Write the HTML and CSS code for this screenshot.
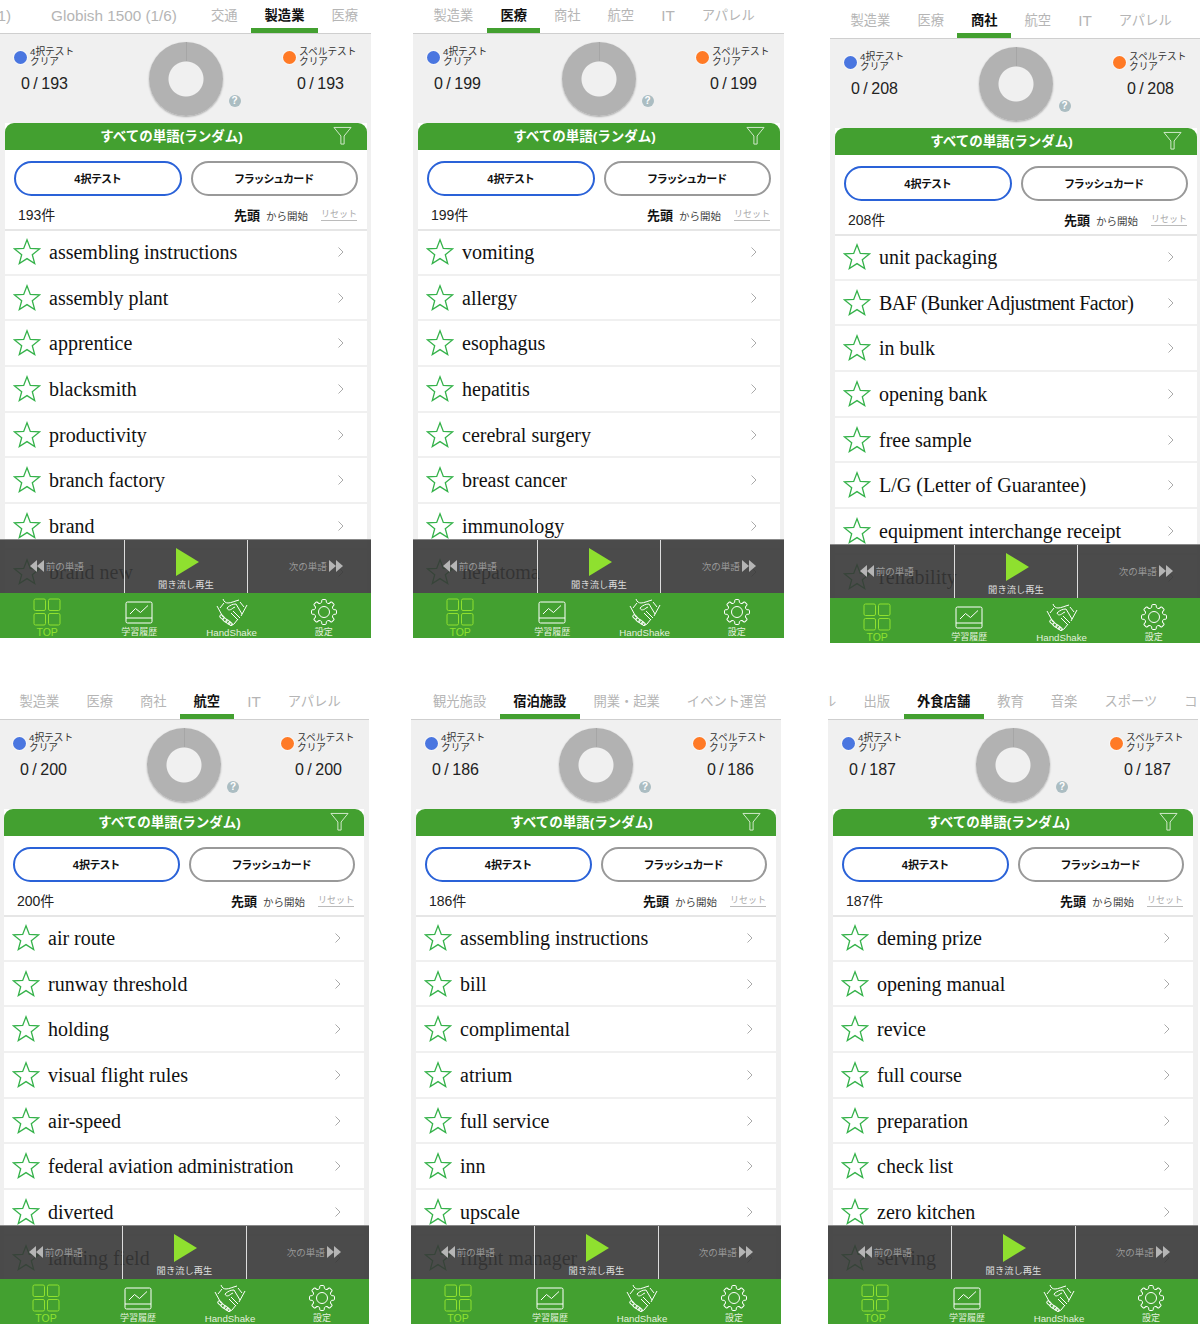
FILE: index.html
```html
<!DOCTYPE html>
<html lang="ja">
<head>
    <meta charset="UTF-8">
    <title>単語リスト</title>
    <link rel="stylesheet" href="styles.css">
</head>
<body>
    <svg class="defs" width="0" height="0">
        <symbol id="i-star" viewBox="0 0 28 28"><path d="M14 1.8l3.3 8.6 9.2.5-7.2 5.8 2.4 8.9-7.7-5-7.7 5 2.4-8.9-7.2-5.8 9.2-.5z"/></symbol>
        <symbol id="i-chev" viewBox="0 0 8 12"><path d="M1.5 1.5L6 6l-4.5 4.5"/></symbol>
        <symbol id="i-filter" viewBox="0 0 20 20"><path d="M1 1h18l-7.3 9v8.5h-3.4V10z"/></symbol>
        <symbol id="i-grid" viewBox="0 0 28 28"><rect x="1" y="1" width="11.5" height="11.5" rx="1.5"/><rect x="15.5" y="1" width="11.5" height="11.5" rx="1.5"/><rect x="1" y="15.5" width="11.5" height="11.5" rx="1.5"/><rect x="15.5" y="15.5" width="11.5" height="11.5" rx="1.5"/></symbol>
        <symbol id="i-chart" viewBox="0 0 28 24"><rect x="1" y="1" width="26" height="21" rx="1.5"/><path d="M1 17h26M5 13l5.5-5.5 5 4L23 4.5"/></symbol>
        <symbol id="i-hands" viewBox="0 0 32 28">
            <path d="M7 1C8 4 10 5 12 5C15 5 19 3 23 2M1 8L7 19M31 7L25 18M8 5L4 10M24 4L28 9"/>
            <path d="M11 10C14 7 17 6 20 6L26 16M11 10C12 13 15 12 17 10L19 9M17 13L24 20M15 15L22 22M22 21L18 26C17 27 16 27 15 26"/>
            <rect x="3.5" y="17.5" width="5" height="3" rx="1.5" transform="rotate(45 6 19)"/>
            <rect x="6.5" y="20.5" width="5" height="3" rx="1.5" transform="rotate(45 9 22)"/>
            <rect x="9.5" y="22.5" width="5" height="3" rx="1.5" transform="rotate(45 12 24)"/>
            <rect x="12.5" y="24.5" width="4" height="2.5" rx="1.2" transform="rotate(45 14.5 25.7)"/>
        </symbol>
        <symbol id="i-gear" viewBox="0 0 28 28">
            <circle cx="14" cy="14" r="5.5"/>
            <path d="M10.36 5.22Q11.3 5 11.6 4.4L11.9 2Q12 1.5 12.6 1.5H15.4Q16 1.5 16.1 2L16.4 4.4Q16.7 5 17.64 5.22"/>
            <path transform="rotate(45 14 14)" d="M10.36 5.22Q11.3 5 11.6 4.4L11.9 2Q12 1.5 12.6 1.5H15.4Q16 1.5 16.1 2L16.4 4.4Q16.7 5 17.64 5.22"/>
            <path transform="rotate(90 14 14)" d="M10.36 5.22Q11.3 5 11.6 4.4L11.9 2Q12 1.5 12.6 1.5H15.4Q16 1.5 16.1 2L16.4 4.4Q16.7 5 17.64 5.22"/>
            <path transform="rotate(135 14 14)" d="M10.36 5.22Q11.3 5 11.6 4.4L11.9 2Q12 1.5 12.6 1.5H15.4Q16 1.5 16.1 2L16.4 4.4Q16.7 5 17.64 5.22"/>
            <path transform="rotate(180 14 14)" d="M10.36 5.22Q11.3 5 11.6 4.4L11.9 2Q12 1.5 12.6 1.5H15.4Q16 1.5 16.1 2L16.4 4.4Q16.7 5 17.64 5.22"/>
            <path transform="rotate(225 14 14)" d="M10.36 5.22Q11.3 5 11.6 4.4L11.9 2Q12 1.5 12.6 1.5H15.4Q16 1.5 16.1 2L16.4 4.4Q16.7 5 17.64 5.22"/>
            <path transform="rotate(270 14 14)" d="M10.36 5.22Q11.3 5 11.6 4.4L11.9 2Q12 1.5 12.6 1.5H15.4Q16 1.5 16.1 2L16.4 4.4Q16.7 5 17.64 5.22"/>
            <path transform="rotate(315 14 14)" d="M10.36 5.22Q11.3 5 11.6 4.4L11.9 2Q12 1.5 12.6 1.5H15.4Q16 1.5 16.1 2L16.4 4.4Q16.7 5 17.64 5.22"/>
        </symbol>
    </svg>

    <div class="row row-top">

        <!-- 製造業 -->
        <div class="phone">
            <div class="tabs tabs-a">
                <span class="tab tab-latin tab-first">1)</span><span class="tab tab-latin tab-globish">Globish 1500 (1/6)</span><span class="tab">交通</span><span class="tab active">製造業</span><span class="tab">医療</span>
            </div>
            <div class="stats">
                <div class="stat"><div class="stat-label"><i class="dot dot-blue"></i><span>4択テスト<br>クリア</span></div><div class="stat-num">0 / 193</div></div>
                <div class="donut"><i class="help">?</i></div>
                <div class="stat stat-right"><div class="stat-label"><i class="dot dot-orange"></i><span>スペルテスト<br>クリア</span></div><div class="stat-num">0 / 193</div></div>
            </div>
            <div class="card">
                <div class="card-head">すべての単語(ランダム)<svg class="filter"><use href="#i-filter"/></svg></div>
                <div class="modes"><button class="mode mode-on">4択テスト</button><button class="mode">フラッシュカード</button></div>
                <div class="meta"><span class="count">193件</span><span class="start"><b>先頭</b>から開始</span><span class="reset">リセット</span></div>
                <ul class="words">
                    <li><svg class="star"><use href="#i-star"/></svg><span>assembling instructions</span><svg class="chev"><use href="#i-chev"/></svg></li>
                    <li><svg class="star"><use href="#i-star"/></svg><span>assembly plant</span><svg class="chev"><use href="#i-chev"/></svg></li>
                    <li><svg class="star"><use href="#i-star"/></svg><span>apprentice</span><svg class="chev"><use href="#i-chev"/></svg></li>
                    <li><svg class="star"><use href="#i-star"/></svg><span>blacksmith</span><svg class="chev"><use href="#i-chev"/></svg></li>
                    <li><svg class="star"><use href="#i-star"/></svg><span>productivity</span><svg class="chev"><use href="#i-chev"/></svg></li>
                    <li><svg class="star"><use href="#i-star"/></svg><span>branch factory</span><svg class="chev"><use href="#i-chev"/></svg></li>
                    <li><svg class="star"><use href="#i-star"/></svg><span>brand</span><svg class="chev"><use href="#i-chev"/></svg></li>
                    <li><svg class="star"><use href="#i-star"/></svg><span>brand new</span><svg class="chev"><use href="#i-chev"/></svg></li>
                </ul>
            </div>
            <div class="dock">
                <div class="player">
                    <div class="player-btn player-prev"><i class="skip skip-prev"></i><i class="skip skip-prev"></i><span class="player-side">前の単語</span></div>
                    <div class="player-btn player-main"><i class="play"></i><span>聞き流し再生</span></div>
                    <div class="player-btn player-next"><span class="player-side">次の単語</span><i class="skip skip-next"></i><i class="skip skip-next"></i></div>
                </div>
                <nav class="nav">
                    <div class="nav-item nav-on"><svg class="nav-grid"><use href="#i-grid"/></svg>TOP</div>
                    <div class="nav-item"><svg class="nav-chart"><use href="#i-chart"/></svg>学習履歴</div>
                    <div class="nav-item nav-latin"><svg class="nav-hands"><use href="#i-hands"/></svg>HandShake</div>
                    <div class="nav-item"><svg class="nav-gear"><use href="#i-gear"/></svg>設定</div>
                </nav>
            </div>
        </div>

        <!-- 医療 -->
        <div class="phone phone-2">
            <div class="tabs tabs-b">
                <span class="tab">製造業</span><span class="tab active">医療</span><span class="tab">商社</span><span class="tab">航空</span><span class="tab tab-latin">IT</span><span class="tab">アパレル</span>
            </div>
            <div class="stats">
                <div class="stat"><div class="stat-label"><i class="dot dot-blue"></i><span>4択テスト<br>クリア</span></div><div class="stat-num">0 / 199</div></div>
                <div class="donut"><i class="help">?</i></div>
                <div class="stat stat-right"><div class="stat-label"><i class="dot dot-orange"></i><span>スペルテスト<br>クリア</span></div><div class="stat-num">0 / 199</div></div>
            </div>
            <div class="card">
                <div class="card-head">すべての単語(ランダム)<svg class="filter"><use href="#i-filter"/></svg></div>
                <div class="modes"><button class="mode mode-on">4択テスト</button><button class="mode">フラッシュカード</button></div>
                <div class="meta"><span class="count">199件</span><span class="start"><b>先頭</b>から開始</span><span class="reset">リセット</span></div>
                <ul class="words">
                    <li><svg class="star"><use href="#i-star"/></svg><span>vomiting</span><svg class="chev"><use href="#i-chev"/></svg></li>
                    <li><svg class="star"><use href="#i-star"/></svg><span>allergy</span><svg class="chev"><use href="#i-chev"/></svg></li>
                    <li><svg class="star"><use href="#i-star"/></svg><span>esophagus</span><svg class="chev"><use href="#i-chev"/></svg></li>
                    <li><svg class="star"><use href="#i-star"/></svg><span>hepatitis</span><svg class="chev"><use href="#i-chev"/></svg></li>
                    <li><svg class="star"><use href="#i-star"/></svg><span>cerebral surgery</span><svg class="chev"><use href="#i-chev"/></svg></li>
                    <li><svg class="star"><use href="#i-star"/></svg><span>breast cancer</span><svg class="chev"><use href="#i-chev"/></svg></li>
                    <li><svg class="star"><use href="#i-star"/></svg><span>immunology</span><svg class="chev"><use href="#i-chev"/></svg></li>
                    <li><svg class="star"><use href="#i-star"/></svg><span>hepatoma</span><svg class="chev"><use href="#i-chev"/></svg></li>
                </ul>
            </div>
            <div class="dock">
                <div class="player">
                    <div class="player-btn player-prev"><i class="skip skip-prev"></i><i class="skip skip-prev"></i><span class="player-side">前の単語</span></div>
                    <div class="player-btn player-main"><i class="play"></i><span>聞き流し再生</span></div>
                    <div class="player-btn player-next"><span class="player-side">次の単語</span><i class="skip skip-next"></i><i class="skip skip-next"></i></div>
                </div>
                <nav class="nav">
                    <div class="nav-item nav-on"><svg class="nav-grid"><use href="#i-grid"/></svg>TOP</div>
                    <div class="nav-item"><svg class="nav-chart"><use href="#i-chart"/></svg>学習履歴</div>
                    <div class="nav-item nav-latin"><svg class="nav-hands"><use href="#i-hands"/></svg>HandShake</div>
                    <div class="nav-item"><svg class="nav-gear"><use href="#i-gear"/></svg>設定</div>
                </nav>
            </div>
        </div>

        <!-- 商社 -->
        <div class="phone phone-3">
            <div class="tabs tabs-b">
                <span class="tab">製造業</span><span class="tab">医療</span><span class="tab active">商社</span><span class="tab">航空</span><span class="tab tab-latin">IT</span><span class="tab">アパレル</span>
            </div>
            <div class="stats">
                <div class="stat"><div class="stat-label"><i class="dot dot-blue"></i><span>4択テスト<br>クリア</span></div><div class="stat-num">0 / 208</div></div>
                <div class="donut"><i class="help">?</i></div>
                <div class="stat stat-right"><div class="stat-label"><i class="dot dot-orange"></i><span>スペルテスト<br>クリア</span></div><div class="stat-num">0 / 208</div></div>
            </div>
            <div class="card">
                <div class="card-head">すべての単語(ランダム)<svg class="filter"><use href="#i-filter"/></svg></div>
                <div class="modes"><button class="mode mode-on">4択テスト</button><button class="mode">フラッシュカード</button></div>
                <div class="meta"><span class="count">208件</span><span class="start"><b>先頭</b>から開始</span><span class="reset">リセット</span></div>
                <ul class="words">
                    <li><svg class="star"><use href="#i-star"/></svg><span>unit packaging</span><svg class="chev"><use href="#i-chev"/></svg></li>
                    <li><svg class="star"><use href="#i-star"/></svg><span class="word-tight">BAF (Bunker Adjustment Factor)</span><svg class="chev"><use href="#i-chev"/></svg></li>
                    <li><svg class="star"><use href="#i-star"/></svg><span>in bulk</span><svg class="chev"><use href="#i-chev"/></svg></li>
                    <li><svg class="star"><use href="#i-star"/></svg><span>opening bank</span><svg class="chev"><use href="#i-chev"/></svg></li>
                    <li><svg class="star"><use href="#i-star"/></svg><span>free sample</span><svg class="chev"><use href="#i-chev"/></svg></li>
                    <li><svg class="star"><use href="#i-star"/></svg><span>L/G (Letter of Guarantee)</span><svg class="chev"><use href="#i-chev"/></svg></li>
                    <li><svg class="star"><use href="#i-star"/></svg><span>equipment interchange receipt</span><svg class="chev"><use href="#i-chev"/></svg></li>
                    <li><svg class="star"><use href="#i-star"/></svg><span>reliability</span><svg class="chev"><use href="#i-chev"/></svg></li>
                </ul>
            </div>
            <div class="dock">
                <div class="player">
                    <div class="player-btn player-prev"><i class="skip skip-prev"></i><i class="skip skip-prev"></i><span class="player-side">前の単語</span></div>
                    <div class="player-btn player-main"><i class="play"></i><span>聞き流し再生</span></div>
                    <div class="player-btn player-next"><span class="player-side">次の単語</span><i class="skip skip-next"></i><i class="skip skip-next"></i></div>
                </div>
                <nav class="nav">
                    <div class="nav-item nav-on"><svg class="nav-grid"><use href="#i-grid"/></svg>TOP</div>
                    <div class="nav-item"><svg class="nav-chart"><use href="#i-chart"/></svg>学習履歴</div>
                    <div class="nav-item nav-latin"><svg class="nav-hands"><use href="#i-hands"/></svg>HandShake</div>
                    <div class="nav-item"><svg class="nav-gear"><use href="#i-gear"/></svg>設定</div>
                </nav>
            </div>
        </div>
    </div>

    <div class="row row-bottom">

        <!-- 航空 -->
        <div class="phone">
            <div class="tabs tabs-b">
                <span class="tab">製造業</span><span class="tab">医療</span><span class="tab">商社</span><span class="tab active">航空</span><span class="tab tab-latin">IT</span><span class="tab">アパレル</span>
            </div>
            <div class="stats">
                <div class="stat"><div class="stat-label"><i class="dot dot-blue"></i><span>4択テスト<br>クリア</span></div><div class="stat-num">0 / 200</div></div>
                <div class="donut"><i class="help">?</i></div>
                <div class="stat stat-right"><div class="stat-label"><i class="dot dot-orange"></i><span>スペルテスト<br>クリア</span></div><div class="stat-num">0 / 200</div></div>
            </div>
            <div class="card">
                <div class="card-head">すべての単語(ランダム)<svg class="filter"><use href="#i-filter"/></svg></div>
                <div class="modes"><button class="mode mode-on">4択テスト</button><button class="mode">フラッシュカード</button></div>
                <div class="meta"><span class="count">200件</span><span class="start"><b>先頭</b>から開始</span><span class="reset">リセット</span></div>
                <ul class="words">
                    <li><svg class="star"><use href="#i-star"/></svg><span>air route</span><svg class="chev"><use href="#i-chev"/></svg></li>
                    <li><svg class="star"><use href="#i-star"/></svg><span>runway threshold</span><svg class="chev"><use href="#i-chev"/></svg></li>
                    <li><svg class="star"><use href="#i-star"/></svg><span>holding</span><svg class="chev"><use href="#i-chev"/></svg></li>
                    <li><svg class="star"><use href="#i-star"/></svg><span>visual flight rules</span><svg class="chev"><use href="#i-chev"/></svg></li>
                    <li><svg class="star"><use href="#i-star"/></svg><span>air-speed</span><svg class="chev"><use href="#i-chev"/></svg></li>
                    <li><svg class="star"><use href="#i-star"/></svg><span>federal aviation administration</span><svg class="chev"><use href="#i-chev"/></svg></li>
                    <li><svg class="star"><use href="#i-star"/></svg><span>diverted</span><svg class="chev"><use href="#i-chev"/></svg></li>
                    <li><svg class="star"><use href="#i-star"/></svg><span>landing field</span><svg class="chev"><use href="#i-chev"/></svg></li>
                </ul>
            </div>
            <div class="dock">
                <div class="player">
                    <div class="player-btn player-prev"><i class="skip skip-prev"></i><i class="skip skip-prev"></i><span class="player-side">前の単語</span></div>
                    <div class="player-btn player-main"><i class="play"></i><span>聞き流し再生</span></div>
                    <div class="player-btn player-next"><span class="player-side">次の単語</span><i class="skip skip-next"></i><i class="skip skip-next"></i></div>
                </div>
                <nav class="nav">
                    <div class="nav-item nav-on"><svg class="nav-grid"><use href="#i-grid"/></svg>TOP</div>
                    <div class="nav-item"><svg class="nav-chart"><use href="#i-chart"/></svg>学習履歴</div>
                    <div class="nav-item nav-latin"><svg class="nav-hands"><use href="#i-hands"/></svg>HandShake</div>
                    <div class="nav-item"><svg class="nav-gear"><use href="#i-gear"/></svg>設定</div>
                </nav>
            </div>
        </div>

        <!-- 宿泊施設 -->
        <div class="phone phone-5">
            <div class="tabs tabs-e">
                <span class="tab">観光施設</span><span class="tab active">宿泊施設</span><span class="tab">開業・起業</span><span class="tab">イベント運営</span>
            </div>
            <div class="stats">
                <div class="stat"><div class="stat-label"><i class="dot dot-blue"></i><span>4択テスト<br>クリア</span></div><div class="stat-num">0 / 186</div></div>
                <div class="donut"><i class="help">?</i></div>
                <div class="stat stat-right"><div class="stat-label"><i class="dot dot-orange"></i><span>スペルテスト<br>クリア</span></div><div class="stat-num">0 / 186</div></div>
            </div>
            <div class="card">
                <div class="card-head">すべての単語(ランダム)<svg class="filter"><use href="#i-filter"/></svg></div>
                <div class="modes"><button class="mode mode-on">4択テスト</button><button class="mode">フラッシュカード</button></div>
                <div class="meta"><span class="count">186件</span><span class="start"><b>先頭</b>から開始</span><span class="reset">リセット</span></div>
                <ul class="words">
                    <li><svg class="star"><use href="#i-star"/></svg><span>assembling instructions</span><svg class="chev"><use href="#i-chev"/></svg></li>
                    <li><svg class="star"><use href="#i-star"/></svg><span>bill</span><svg class="chev"><use href="#i-chev"/></svg></li>
                    <li><svg class="star"><use href="#i-star"/></svg><span>complimental</span><svg class="chev"><use href="#i-chev"/></svg></li>
                    <li><svg class="star"><use href="#i-star"/></svg><span>atrium</span><svg class="chev"><use href="#i-chev"/></svg></li>
                    <li><svg class="star"><use href="#i-star"/></svg><span>full service</span><svg class="chev"><use href="#i-chev"/></svg></li>
                    <li><svg class="star"><use href="#i-star"/></svg><span>inn</span><svg class="chev"><use href="#i-chev"/></svg></li>
                    <li><svg class="star"><use href="#i-star"/></svg><span>upscale</span><svg class="chev"><use href="#i-chev"/></svg></li>
                    <li><svg class="star"><use href="#i-star"/></svg><span>flight manager</span><svg class="chev"><use href="#i-chev"/></svg></li>
                </ul>
            </div>
            <div class="dock">
                <div class="player">
                    <div class="player-btn player-prev"><i class="skip skip-prev"></i><i class="skip skip-prev"></i><span class="player-side">前の単語</span></div>
                    <div class="player-btn player-main"><i class="play"></i><span>聞き流し再生</span></div>
                    <div class="player-btn player-next"><span class="player-side">次の単語</span><i class="skip skip-next"></i><i class="skip skip-next"></i></div>
                </div>
                <nav class="nav">
                    <div class="nav-item nav-on"><svg class="nav-grid"><use href="#i-grid"/></svg>TOP</div>
                    <div class="nav-item"><svg class="nav-chart"><use href="#i-chart"/></svg>学習履歴</div>
                    <div class="nav-item nav-latin"><svg class="nav-hands"><use href="#i-hands"/></svg>HandShake</div>
                    <div class="nav-item"><svg class="nav-gear"><use href="#i-gear"/></svg>設定</div>
                </nav>
            </div>
        </div>

        <!-- 外食店舗 -->
        <div class="phone phone-6">
            <div class="tabs tabs-f">
                <span class="tab">アパレル</span><span class="tab">出版</span><span class="tab active">外食店舗</span><span class="tab">教育</span><span class="tab">音楽</span><span class="tab">スポーツ</span><span class="tab">コンサル</span>
            </div>
            <div class="stats">
                <div class="stat"><div class="stat-label"><i class="dot dot-blue"></i><span>4択テスト<br>クリア</span></div><div class="stat-num">0 / 187</div></div>
                <div class="donut"><i class="help">?</i></div>
                <div class="stat stat-right"><div class="stat-label"><i class="dot dot-orange"></i><span>スペルテスト<br>クリア</span></div><div class="stat-num">0 / 187</div></div>
            </div>
            <div class="card">
                <div class="card-head">すべての単語(ランダム)<svg class="filter"><use href="#i-filter"/></svg></div>
                <div class="modes"><button class="mode mode-on">4択テスト</button><button class="mode">フラッシュカード</button></div>
                <div class="meta"><span class="count">187件</span><span class="start"><b>先頭</b>から開始</span><span class="reset">リセット</span></div>
                <ul class="words">
                    <li><svg class="star"><use href="#i-star"/></svg><span>deming prize</span><svg class="chev"><use href="#i-chev"/></svg></li>
                    <li><svg class="star"><use href="#i-star"/></svg><span>opening manual</span><svg class="chev"><use href="#i-chev"/></svg></li>
                    <li><svg class="star"><use href="#i-star"/></svg><span>revice</span><svg class="chev"><use href="#i-chev"/></svg></li>
                    <li><svg class="star"><use href="#i-star"/></svg><span>full course</span><svg class="chev"><use href="#i-chev"/></svg></li>
                    <li><svg class="star"><use href="#i-star"/></svg><span>preparation</span><svg class="chev"><use href="#i-chev"/></svg></li>
                    <li><svg class="star"><use href="#i-star"/></svg><span>check list</span><svg class="chev"><use href="#i-chev"/></svg></li>
                    <li><svg class="star"><use href="#i-star"/></svg><span>zero kitchen</span><svg class="chev"><use href="#i-chev"/></svg></li>
                    <li><svg class="star"><use href="#i-star"/></svg><span>serving</span><svg class="chev"><use href="#i-chev"/></svg></li>
                </ul>
            </div>
            <div class="dock">
                <div class="player">
                    <div class="player-btn player-prev"><i class="skip skip-prev"></i><i class="skip skip-prev"></i><span class="player-side">前の単語</span></div>
                    <div class="player-btn player-main"><i class="play"></i><span>聞き流し再生</span></div>
                    <div class="player-btn player-next"><span class="player-side">次の単語</span><i class="skip skip-next"></i><i class="skip skip-next"></i></div>
                </div>
                <nav class="nav">
                    <div class="nav-item nav-on"><svg class="nav-grid"><use href="#i-grid"/></svg>TOP</div>
                    <div class="nav-item"><svg class="nav-chart"><use href="#i-chart"/></svg>学習履歴</div>
                    <div class="nav-item nav-latin"><svg class="nav-hands"><use href="#i-hands"/></svg>HandShake</div>
                    <div class="nav-item"><svg class="nav-gear"><use href="#i-gear"/></svg>設定</div>
                </nav>
            </div>
        </div>
    </div>
</body>
</html>
```

FILE: styles.css
```css
* {
    box-sizing: border-box;
}

html, body {
    margin: 0;
    padding: 0;
    background: #fff;
    overflow: hidden;
}

body {
    width: 1200px;
    height: 1324px;
    font-family: "Liberation Sans", "Noto Sans CJK JP", sans-serif;
    color: #222;
}

.defs {
    display: block;
    height: 0;
}

.row {
    display: flex;
    align-items: flex-start;
}

.row-top {
    height: 686px;
}

.row-bottom {
    margin-left: -1px;
}

.phone {
    position: relative;
    flex: none;
    width: 371px;
    height: 638px;
    overflow: hidden;
    background: #f0f0f0;
}

.row-bottom .phone {
    width: 370px;
}

.phone-2 {
    margin-left: 42px;
}

.phone-3 {
    margin-left: 46px;
    margin-top: 5px;
}

.phone-5 {
    margin-left: 42px;
}

.phone-6 {
    margin-left: 47px;
}

/* tabs */
.tabs {
    display: flex;
    height: 34px;
    background: #fff;
    border-bottom: 1px solid #cfcfcf;
    overflow: hidden;
    white-space: nowrap;
}

.tabs-a {
    margin-left: -16px;
}

.tabs-b {
    padding-left: 7px;
}

.tabs-e {
    padding-left: 8.5px;
}

.tabs-f {
    margin-left: -58px;
}

.tab {
    flex: none;
    height: 33px;
    padding: 7px 13.5px 0;
    font-size: 13.3px;
    line-height: 17px;
    color: #b5b5b5;
}

.tab-latin {
    font-size: 15.3px;
}

.tab-first {
    padding-right: 26.5px;
}

.tab-globish {
    margin-right: 7px;
}

.tab.active {
    color: #111;
    font-weight: 700;
    border-bottom: 5px solid #43a030;
}

/* stats */
.stats {
    display: flex;
    justify-content: space-between;
    height: 89px;
    padding: 13px 14px 0;
}

.stat {
    width: 74px;
}

.stat-label {
    display: flex;
    align-items: center;
    gap: 3px;
    height: 20px;
    font-size: 9.7px;
    line-height: 10px;
    color: #333;
    white-space: nowrap;
}

.dot {
    flex: none;
    width: 13px;
    height: 13px;
    border-radius: 50%;
    box-shadow: 0 0 0 1px rgba(255, 255, 255, 0.5);
}

.dot-blue {
    background: #4a76e0;
}

.dot-orange {
    background: #ff7a26;
}

.stat-num {
    margin: 6px 0 0 7px;
    font-size: 16px;
    word-spacing: -1px;
    line-height: 22px;
    white-space: nowrap;
}

.stat-right .stat-num {
    margin-left: 14px;
}

.donut {
    position: relative;
    flex: none;
    width: 74px;
    height: 74px;
    margin-top: -5px;
    border-radius: 50%;
    background: radial-gradient(circle, #f0f0f0 17px, #b2b2b2 18px);
    box-shadow: 0 1px 2px rgba(0, 0, 0, 0.3);
}

/* seam at the top of the empty chart */
.donut::before {
    content: "";
    position: absolute;
    left: 37px;
    top: 0;
    width: 1px;
    height: 19px;
    background: #a6a6a6;
}

.help {
    position: absolute;
    left: 80px;
    top: 53px;
    width: 12px;
    height: 12px;
    border-radius: 50%;
    background: #abbdc2;
    color: #fff;
    font-size: 10px;
    font-style: normal;
    font-weight: 700;
    line-height: 12px;
    text-align: center;
}

/* card */
.card {
    margin: 0 4px 0 5px;
    background: #fff;
}

.row-bottom .card {
    margin-right: 5px;
}

.card-head {
    position: relative;
    height: 27px;
    padding-right: 29px;
    border-radius: 9px 9px 0 0;
    background: #43a030;
    color: #fff;
    font-size: 13.5px;
    font-weight: 700;
    line-height: 27px;
    text-align: center;
}

.filter {
    position: absolute;
    right: 15px;
    top: 3px;
    width: 19px;
    height: 20px;
    fill: none;
    stroke: #d8ecd2;
    stroke-width: 1;
}

.modes {
    display: flex;
    gap: 9px;
    padding: 11px 9px 0;
}

.mode {
    flex: 1;
    height: 35px;
    padding: 0 0 2px;
    border: 2px solid #999;
    border-radius: 18px;
    background: #fff;
    color: #111;
    font-family: inherit;
    font-size: 11px;
    font-weight: 700;
    font-feature-settings: "palt";
}

.mode-on {
    border-color: #2a62d8;
}

.meta {
    display: flex;
    align-items: center;
    height: 35px;
    padding: 3px 10px 0 13px;
    border-bottom: 2px solid #e6e6e6;
}

.count {
    font-size: 14px;
}

.start {
    margin-left: auto;
    font-size: 10.5px;
    color: #444;
}

.start b {
    margin-right: 6px;
    font-size: 13px;
    color: #111;
}

.reset {
    margin-left: 13px;
    font-size: 9px;
    color: #aaa;
    border-bottom: 1px solid #bbb;
}

/* word list */
.words {
    margin: -1px 0 0;
    padding: 0;
    list-style: none;
}

.words li {
    display: flex;
    align-items: center;
    height: 45.7px;
    padding: 0 22px 0 8px;
    border-bottom: 2px solid #f0f0f0;
    font-family: "Liberation Serif", serif;
    font-size: 20px;
    color: #111;
}

.words li span {
    padding-top: 1px;
}

.words li .word-tight {
    letter-spacing: -0.5px;
}

.star {
    flex: none;
    width: 28px;
    height: 28px;
    margin-right: 8px;
    fill: none;
    stroke: #35b24a;
    stroke-width: 1.3;
}

.chev {
    flex: none;
    width: 8px;
    height: 12px;
    margin-left: auto;
    fill: none;
    stroke: #aaa;
    stroke-width: 1;
}

/* player and bottom nav, they float over the list */
.dock {
    position: absolute;
    left: 0;
    right: 0;
    bottom: 0;
}

.player {
    display: grid;
    grid-template-columns: repeat(3, 1fr);
    height: 54px;
    border-top: 1px solid #888;
    background: rgba(55, 55, 55, 0.9);
}

.player-btn {
    display: flex;
    align-items: center;
    justify-content: center;
    border-left: 1px solid #ddd;
}

.player-btn:first-child {
    border-left: 0;
}

.player-prev {
    padding: 0 8px 2px 0;
}

.player-next {
    padding: 0 0 2px 10px;
}

.player-side {
    margin: 0 2px;
    font-size: 9.5px;
    color: #999;
}

.skip {
    width: 0;
    height: 0;
    border-top: 6px solid transparent;
    border-bottom: 6px solid transparent;
}

.skip-prev {
    border-right: 7.5px solid #b5b5b5;
}

.skip-next {
    border-left: 7.5px solid #b5b5b5;
}

.player-main {
    flex-direction: column;
    justify-content: flex-start;
    gap: 3px;
    padding-top: 8px;
    font-size: 9.3px;
    line-height: 12px;
    color: #ddd;
}

.play {
    width: 0;
    height: 0;
    margin-left: 3px;
    border-top: 14px solid transparent;
    border-bottom: 14px solid transparent;
    border-left: 23px solid #8fe02f;
}

.nav {
    display: grid;
    grid-template-columns: repeat(4, 1fr);
    height: 45px;
    padding: 0 1px;
    background: #43a030;
}

.nav-item {
    display: flex;
    flex-direction: column;
    align-items: center;
    justify-content: flex-end;
    height: 45px;
    font-size: 9px;
    line-height: 11px;
    color: #e4f1df;
    white-space: nowrap;
}

.nav-latin {
    font-size: 9.7px;
}

.nav-item svg {
    flex: none;
    margin-bottom: 1px;
    fill: none;
    stroke: #fff;
    stroke-width: 1;
}

.nav-on {
    font-size: 10.5px;
    color: #8fe02f;
}

.nav-item .nav-grid {
    width: 28px;
    height: 28px;
    stroke: #8fe02f;
}

.nav-item .nav-chart {
    width: 28px;
    height: 24px;
    margin-bottom: 2px;
}

.nav-hands {
    width: 32px;
    height: 28px;
}

.nav-gear {
    width: 28px;
    height: 28px;
}
```
